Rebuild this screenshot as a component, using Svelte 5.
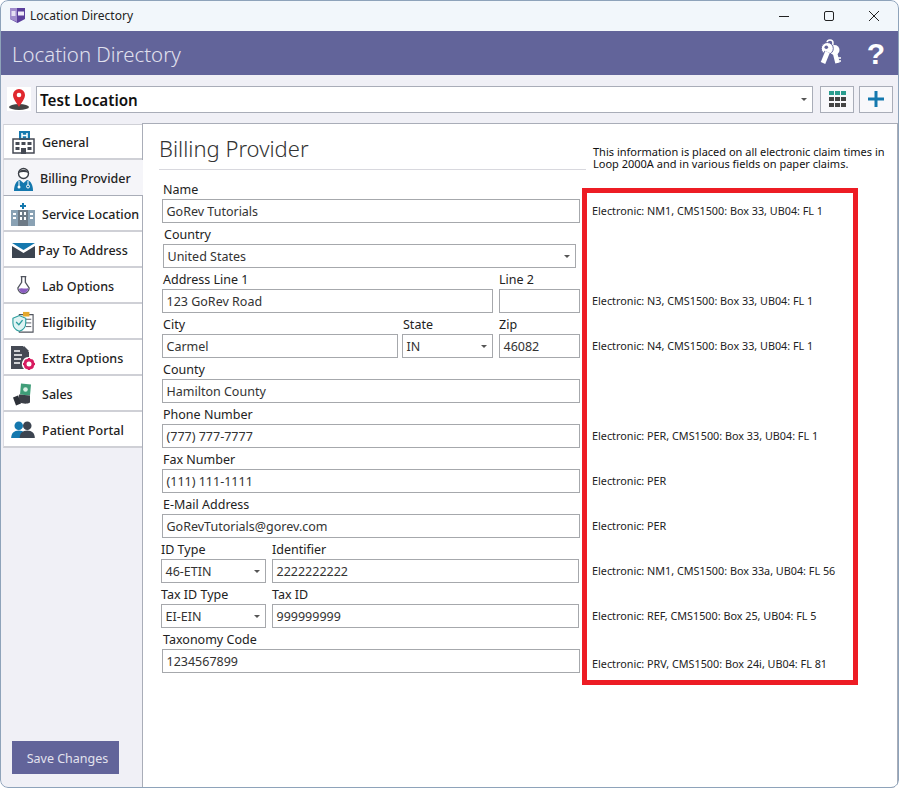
<script>
	const tabs = [
		{ id: 'general', label: 'General' },
		{ id: 'billing', label: 'Billing Provider', active: true, shift: -2 },
		{ id: 'service', label: 'Service Location' },
		{ id: 'pay', label: 'Pay To Address', shift: -4 },
		{ id: 'lab', label: 'Lab Options' },
		{ id: 'eligibility', label: 'Eligibility' },
		{ id: 'extra', label: 'Extra Options' },
		{ id: 'sales', label: 'Sales' },
		{ id: 'portal', label: 'Patient Portal' }
	];

	const rows = [
		[{ label: 'Name', value: 'GoRev Tutorials', w: 418, ml: 1 }],
		[{ label: 'Country', value: 'United States', w: 413, ml: 2, select: true }],
		[
			{ label: 'Address Line 1', value: '123 GoRev Road', w: 331, ml: 1 },
			{ label: 'Line 2', value: '', w: 81, ml: 6 }
		],
		[
			{ label: 'City', value: 'Carmel', w: 236, ml: 1 },
			{ label: 'State', value: 'IN', w: 91, ml: 4, select: true },
			{ label: 'Zip', value: '46082', w: 81, ml: 6 }
		],
		[{ label: 'County', value: 'Hamilton County', w: 418, ml: 1 }],
		[{ label: 'Phone Number', value: '(777) 777-7777', w: 418, ml: 1 }],
		[{ label: 'Fax Number', value: '(111) 111-1111', w: 418, ml: 1 }],
		[{ label: 'E-Mail Address', value: 'GoRevTutorials@gorev.com', w: 418, ml: 1 }],
		[
			{ label: 'ID Type', value: '46-ETIN', w: 105, ml: 0, select: true },
			{ label: 'Identifier', value: '2222222222', w: 307, ml: 6 }
		],
		[
			{ label: 'Tax ID Type', value: 'EI-EIN', w: 105, ml: 0, select: true },
			{ label: 'Tax ID', value: '999999999', w: 307, ml: 6 }
		],
		[{ label: 'Taxonomy Code', value: '1234567899', w: 418, ml: 1 }]
	];

	const notes = [
		'Electronic: NM1, CMS1500: Box 33, UB04: FL 1',
		'',
		'Electronic: N3, CMS1500: Box 33, UB04: FL 1',
		'Electronic: N4, CMS1500: Box 33, UB04: FL 1',
		'',
		'Electronic: PER, CMS1500: Box 33, UB04: FL 1',
		'Electronic: PER',
		'Electronic: PER',
		'Electronic: NM1, CMS1500: Box 33a, UB04: FL 56',
		'Electronic: REF, CMS1500: Box 25, UB04: FL 5',
		'Electronic: PRV, CMS1500: Box 24i, UB04: FL 81'
	];
</script>

<div class="window">
	<div class="titlebar">
		<svg class="logo" width="17" height="17" viewBox="0 0 17 17">
			<path d="M1 1h15v11l-7.5 4L1 12z" fill="#5b3f9c" />
			<path d="M1 1h7v14L1 12z" fill="#a08ccc" />
			<rect x="2.5" y="4" width="4" height="5" fill="#e4def2" />
			<rect x="9" y="4.5" width="6" height="4" fill="#efeaf8" />
		</svg>
		<span class="app-name">Location Directory</span>
		<div class="win-controls">
			<svg width="10" height="10" viewBox="0 0 10 10"><path d="M0 5.500h10" stroke="#222" fill="none" /></svg>
			<svg width="10" height="10" viewBox="0 0 10 10"><rect x="0.500" y="0.500" width="9" height="9" rx="1.500" stroke="#222" fill="none" /></svg>
			<svg width="10" height="10" viewBox="0 0 10 10"><path d="M0 0l10 10M10 0L0 10" stroke="#222" fill="none" /></svg>
		</div>
	</div>

	<header class="header">
		<h1>Location Directory</h1>
		<svg class="keys" width="24" height="28" viewBox="0 0 24 28">
			<circle cx="12" cy="4" r="3" fill="none" stroke="#fff" stroke-width="1.500" />
			<circle cx="16.500" cy="11" r="5" fill="#fff" />
			<path d="M17 14l2.500 10" stroke="#fff" stroke-width="4.500" fill="none" />
			<path d="M20 19h3M21 22h2" stroke="#fff" stroke-width="1.500" fill="none" />
			<circle cx="9.300" cy="9.500" r="6" fill="#fff" stroke="#62649a" />
			<path d="M9.500 13L5 24" stroke="#62649a" stroke-width="6.500" fill="none" />
			<path d="M9.500 13L5 24" stroke="#fff" stroke-width="4.800" fill="none" />
			<circle cx="8.300" cy="8.200" r="1.800" fill="#62649a" />
		</svg>
		<span class="help">?</span>
	</header>

	<div class="toolbar">
		<div class="pin">
			<svg width="24" height="24" viewBox="0 0 24 24">
				<ellipse cx="12" cy="20" rx="10" ry="3" fill="#444" />
				<path d="M12 20C9 15 6 11.500 6 8a6 6 0 0 1 12 0c0 3.500-3 7-6 12z" fill="#e0282e" />
				<circle cx="12" cy="8" r="2.300" fill="#fff" />
			</svg>
		</div>
		<div class="combo">
			<span>Test Location</span>
			<i class="caret"></i>
		</div>
		<button class="tool" aria-label="Grid">
			<svg width="17" height="16" viewBox="0 0 17 16">
				<path d="M0 0h5v4H0zM6 0h5v4H6zM12 0h5v4h-5z" fill="#2a9d8f" />
				<path d="M0 6h5v4H0zM6 6h5v4H6zM12 6h5v4h-5zM0 12h5v4H0zM6 12h5v4H6zM12 12h5v4h-5z" fill="#444" />
			</svg>
		</button>
		<button class="tool" aria-label="Add">
			<svg width="18" height="18" viewBox="0 0 18 18"><path d="M9 1v16M1 9h16" stroke="#1478ae" stroke-width="3" fill="none" /></svg>
		</button>
	</div>

	<div class="body">
		<aside class="sidebar">
			<nav>
				{#each tabs as tab}
					<div class="tab" class:active={tab.active}>
						<span class="tab-icon">
							{#if tab.id === 'general'}
								<svg width="23" height="23" viewBox="0 0 23 23">
									<path d="M7 0h11v9H7z" fill="#1478ae" />
									<path d="M10 2v5M15 2v5M10 4.500h5" stroke="#fff" stroke-width="1.500" fill="none" />
									<path d="M1 8h21v14H1z" fill="none" stroke="#454a54" stroke-width="1.500" />
									<path d="M3.500 11h4v3h-4zM9.500 11h4v3h-4zM15.500 11h4v3h-4zM3.500 16h4v3h-4zM15.500 16h4v3h-4zM9 17h5v6H9z" fill="#454a54" />
								</svg>
							{:else if tab.id === 'billing'}
								<svg width="19" height="24" viewBox="0 0 19 24">
									<circle cx="9.500" cy="6.500" r="5" fill="#fff" stroke="#3c4048" stroke-width="1.400" />
									<path d="M4.500 6c1-4.500 9-4.500 10 0-3-1.500-7-1.500-10 0z" fill="#3c4048" />
									<path d="M0 24c0-6 2-10 6-11l3.500 3 3.500-3c4 1 6 5 6 11z" fill="#1478ae" />
									<path d="M5 14v5M14 14v4" stroke="#fff" fill="none" />
									<circle cx="5" cy="20" r="1.500" fill="#fff" />
									<circle cx="14" cy="19.500" r="1.500" fill="none" stroke="#fff" />
								</svg>
							{:else if tab.id === 'service'}
								<svg width="24" height="24" viewBox="0 0 24 24">
									<path d="M7 0h10v24H7z" fill="#6d7a86" />
									<path d="M0 8h7v16H0zM17 8h7v16h-7z" fill="#8aa2b4" />
									<path d="M7 0h10v8H7z" fill="#fff" />
									<path d="M12 1v6M9 4h6" stroke="#1478ae" stroke-width="2" fill="none" />
									<path d="M2 11h3v2H2zM2 15h3v2H2zM19 11h3v2h-3zM19 15h3v2h-3zM9 10h2v3H9zM13 10h2v3h-2zM9 15h2v3H9zM13 15h2v3h-2z" fill="#fff" />
								</svg>
							{:else if tab.id === 'pay'}
								<svg width="23" height="15" viewBox="0 0 23 15">
									<path d="M0 0h23l-11.500 7z" fill="#1478ae" />
									<path d="M0 3l11.500 7L23 3v12H0z" fill="#3c4450" />
								</svg>
							{:else if tab.id === 'lab'}
								<svg width="15" height="22" viewBox="0 0 16 22">
									<path d="M5 1h6M6 1v6L2 13a6 6 0 1 0 12 0l-4-6V1" fill="#fff" stroke="#50545e" stroke-width="1.400" />
									<path d="M3 14c3-2 7 1 10-1a5 5 0 1 1-10 1z" fill="#8a5cc0" />
								</svg>
							{:else if tab.id === 'eligibility'}
								<svg width="22" height="22" viewBox="0 0 24 24">
									<path d="M8 4h15v19H8z" fill="#fff" stroke="#50545e" stroke-width="1.200" />
									<path d="M12 1h7v5h-7z" fill="#e4a82c" />
									<path d="M15 9h6M15 13h6M15 17h6" stroke="#50545e" fill="none" />
									<path d="M1 8l7-3 7 3v5c0 5-4 8-7 9-3-1-7-4-7-9z" fill="#dff3f3" stroke="#2a9d9d" stroke-width="1.200" />
									<path d="M4.500 12l3 3 4-5" stroke="#2a9d9d" stroke-width="1.400" fill="none" />
								</svg>
							{:else if tab.id === 'extra'}
								<svg width="24" height="24" viewBox="0 0 24 24">
									<path d="M0 0h12l6 6v5a7 7 0 0 0-5 12H0z" fill="#454a54" />
									<path d="M13 0l5 5h-5z" fill="#454a54" />
									<path d="M3 5h6M3 9h8M3 13h7M3 17h6" stroke="#fff" stroke-width="1.500" fill="none" />
									<circle cx="18" cy="18" r="4" fill="none" stroke="#d81b60" stroke-width="3" />
									<path d="M18 12v2M18 22v2M12 18h2M22 18h2M14 14l1 1M22 14l-1 1M14 22l1-1M22 22l-1-1" stroke="#d81b60" stroke-width="2" />
								</svg>
							{:else if tab.id === 'sales'}
								<svg width="20" height="25" viewBox="0 0 20 24">
									<path d="M8 1l10 1-1 11-10-1z" fill="#3f9d78" />
									<circle cx="12.500" cy="7" r="2.300" fill="#d8efe4" />
									<path d="M6 12l11 1v7c-3 2-8 1-10 0l-2-2z" fill="#3c4048" />
									<path d="M0 15l5-2 3 8-5 2z" fill="#2c3038" />
								</svg>
							{:else}
								<svg width="24" height="18" viewBox="0 0 25 19">
									<circle cx="8" cy="5" r="4.500" fill="#1478ae" />
									<path d="M0 18c0-5 3-8 8-8s8 3 8 8z" fill="#1478ae" />
									<circle cx="17" cy="5" r="4.500" fill="#3c4450" />
									<path d="M9 18c0-5 3-8 8-8s8 3 8 8z" fill="#3c4450" />
								</svg>
							{/if}
						</span>
						<span class="tab-label" style="margin-left: {tab.shift || 0}px">{tab.label}</span>
					</div>
				{/each}
			</nav>
			<button class="save">Save Changes</button>
		</aside>

		<main class="main">
			<div class="top">
				<h2>Billing Provider</h2>
				<p class="info">This information is placed on all electronic claim times in Loop 2000A and in various fields on paper claims.</p>
			</div>
			<div class="content">
				<div class="form">
					{#each rows as row}
						<div class="row">
							{#each row as f}
								<div class="field" style="width: {f.w}px; margin-left: {f.ml}px">
									<label class:flush={f.ml === 0 || f.ml === 6} for={f.label}>{f.label}</label>
									<div class="input" id={f.label}>
										<span>{f.value}</span>
										{#if f.select}<i class="caret"></i>{/if}
									</div>
								</div>
							{/each}
						</div>
					{/each}
				</div>
				<div class="notes">
					{#each notes as note}
						<div class="note">{note}</div>
					{/each}
				</div>
			</div>
		</main>
	</div>
</div>

<style>
	:global(body) {
		background: #fff;
	}

	.window {
		position: relative;
		width: 899px;
		height: 788px;
		display: flex;
		flex-direction: column;
		overflow: hidden;
		box-sizing: border-box;
		border-radius: 8px;
		background: #f0f0f6;
		font-family: 'Noto Sans', 'Open Sans', sans-serif;
		font-size: 12.5px;
		color: #222;
	}

	.window::after {
		content: '';
		position: absolute;
		inset: 0;
		border: 1px solid #8ea3ba;
		border-radius: 8px;
		pointer-events: none;
	}

	.titlebar {
		height: 31px;
		display: flex;
		align-items: center;
		padding-left: 9px;
		background: #f2f7fb;
	}

	.app-name {
		margin-left: 4px;
		font-size: 12px;
	}

	.win-controls {
		margin-left: auto;
		display: flex;
		gap: 35px;
		margin-right: 20px;
	}

	.header {
		height: 44px;
		display: flex;
		align-items: center;
		background: #62649a;
		color: #e0e0ee;
		padding-left: 12px;
	}

	h1 {
		margin: 0;
		padding-top: 1px;
		font-size: 20.400px;
		font-weight: 300;
	}

	.keys {
		margin-left: auto;
		margin-right: -6px;
	}

	.help {
		width: 30px;
		margin: 1px 8px 0 25px;
		text-align: center;
		color: #fff;
		font-size: 30px;
		font-weight: 700;
		font-family: 'Liberation Sans', sans-serif;
	}

	.toolbar {
		height: 48px;
		display: flex;
		align-items: center;
		padding-left: 7px;
		box-sizing: border-box;
	}

	.pin {
		width: 24px;
		height: 24px;
		background: #fff;
	}

	.combo {
		width: 777px;
		height: 27px;
		margin-left: 5px;
		box-sizing: border-box;
		display: flex;
		align-items: center;
		justify-content: space-between;
		padding: 1px 4px 0 3px;
		background: #fff;
		border: 1px solid #a9adb8;
		font-size: 15.200px;
		font-weight: 600;
		color: #111;
	}

	.tool {
		width: 34px;
		height: 27px;
		margin-left: 5px;
		padding: 0;
		display: flex;
		align-items: center;
		justify-content: center;
		background: #f8f8fb;
		border: 1px solid #a9adb8;
	}

	.tool:first-of-type {
		margin-left: 7px;
	}

	.caret {
		width: 0;
		height: 0;
		margin-right: 1px;
		border: 3px solid transparent;
		border-top: 3px solid #555;
		border-bottom: 0;
	}

	.body {
		flex: 1;
		display: flex;
		min-height: 0;
	}

	.sidebar {
		width: 142px;
		flex-shrink: 0;
		box-sizing: border-box;
		padding: 1px 0 14px 3px;
		display: flex;
		flex-direction: column;
		justify-content: space-between;
	}

	.tab {
		height: 36px;
		box-sizing: border-box;
		padding-top: 2px;
		display: flex;
		align-items: center;
		background: #fff;
		border-bottom: 2px solid #cfd0d6;
		border-left: 1px solid #dcdce2;
		font-weight: 500;
	}

	.tab:first-child {
		padding-top: 1px;
		border-top: 1px solid #cfd0d6;
	}

	.tab.active {
		background: #f5f5f9;
		border-bottom: 1px solid #a9adb8;
		margin-right: -1px;
		position: relative;
		z-index: 1;
	}

	.tab-icon {
		width: 38px;
		flex-shrink: 0;
		display: flex;
		justify-content: center;
	}

	.tab-label {
		white-space: nowrap;
		color: #222;
	}

	.save {
		width: 107px;
		height: 33px;
		margin-left: 9px;
		padding: 1px 0 0 4px;
		border: 0;
		background: #62649a;
		color: #e2e2ee;
		font: inherit;
	}

	.main {
		flex: 1;
		background: #fff;
		border: 1px solid #a9adb8;
		margin-right: 1px;
		padding-left: 16px;
	}

	.top {
		height: 46px;
		display: flex;
		margin-bottom: 10px;
	}

	h2 {
		width: 427px;
		margin: 0;
		padding-top: 6px;
		box-sizing: border-box;
		font-size: 22px;
		font-weight: 300;
		line-height: 36px;
		color: #333;
		border-bottom: 1px solid #d8d8de;
	}

	.info {
		margin: 22px 0 0 7px;
		width: 300px;
		font-size: 11px;
		line-height: 12px;
		color: #111;
	}

	.content {
		display: flex;
		align-items: flex-start;
	}

	.form {
		width: 423px;
		margin-left: 2px;
	}

	.row {
		height: 45px;
		display: flex;
	}

	.field label {
		display: block;
		height: 19px;
		line-height: 19px;
		padding-left: 1px;
	}

	.field label.flush {
		padding-left: 0;
	}

	.input {
		height: 24px;
		box-sizing: border-box;
		display: flex;
		align-items: center;
		justify-content: space-between;
		padding: 0 4px 0 3.500px;
		border: 1px solid #a6a8ac;
		color: #333;
		background: #fff;
	}

	.notes {
		box-sizing: border-box;
		width: 276px;
		height: 497px;
		margin: 8px 0 0 -2px;
		padding-top: 10px;
		border: 5px solid #ed1c24;
	}

	.note {
		height: 45px;
		padding-left: 5px;
		font-size: 10.800px;
		line-height: 16px;
		color: #222;
		white-space: nowrap;
	}

	.note:last-child {
		margin-top: 3px;
	}
</style>
